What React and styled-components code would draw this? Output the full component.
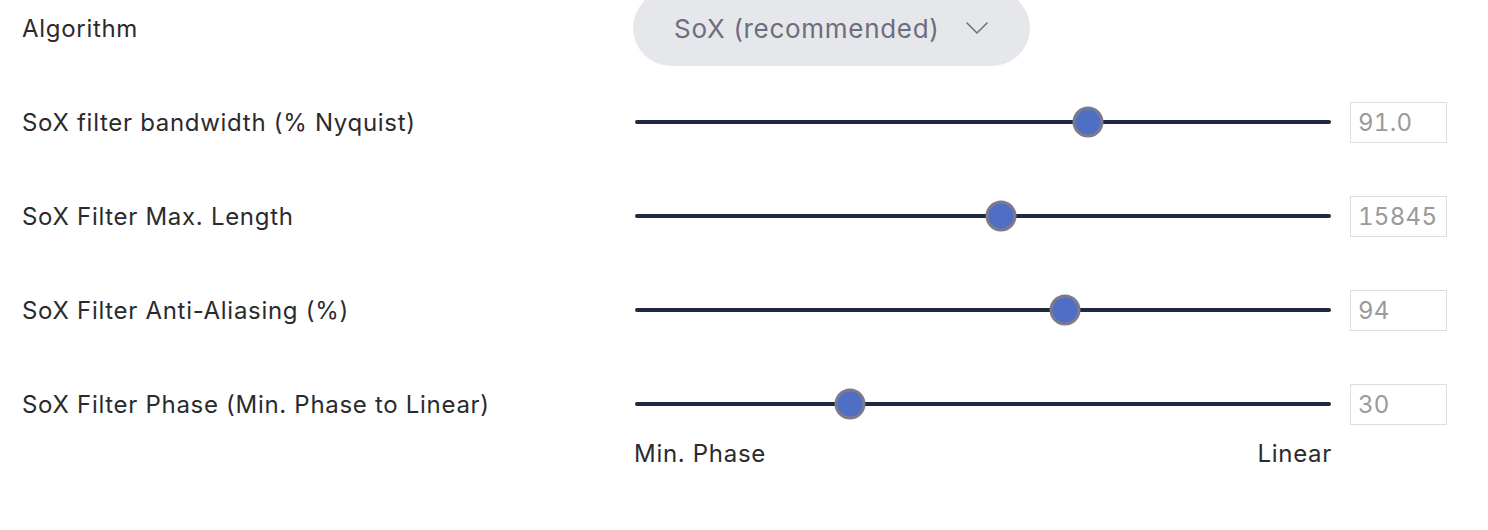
import React from 'react'
import styled, { createGlobalStyle } from 'styled-components'

const GlobalStyle = createGlobalStyle`
    html, body {
        margin: 0;
        padding: 0;
        background: #fff;
        font-family: Inter, "Noto Sans", sans-serif;
    }
`

const Page = styled.div`
    display: flex;
    flex-direction: column;
    margin-top: -19px;
    padding-left: 22px;
    min-height: 549px;
`

const Row = styled.div`
    display: grid;
    grid-template-columns: 594px 700px 97px;
    column-gap: 17px;
    align-items: center;
    height: ${ ( { short } ) => short ? 'auto' : '94px' };
    margin-top: ${ ( { short } ) => short ? '-12px' : '0' };
`

const Label = styled.div`
    font-size: 24px;
    color: #2b2b2e;
    letter-spacing: 0.7px;
`

const Select = styled.div`
    display: flex;
    align-items: center;
    justify-content: space-between;
    width: 397px;
    height: 76px;
    box-sizing: border-box;
    padding: 0 42px 0 41px;
    border-radius: 38px;
    background: #e6e7ea;
    color: #6d6d7e;
    font-size: 26px;
    letter-spacing: 0.7px;
`

const Chevron = () => (
    <svg width="22" height="12" viewBox="0 0 22 12" fill="none">
        <path d="M1 1l10 10L21 1" stroke="#6d6d7e" strokeWidth="1.5" strokeLinecap="round" strokeLinejoin="round" />
    </svg>
)

const SliderCol = styled.div`
    padding: 0 2px;
`

const Track = styled.div`
    position: relative;
    height: 4px;
    background: #1f2940;
    border-radius: 2px;
`

const Thumb = styled.div`
    position: absolute;
    top: 50%;
    width: 31px;
    height: 31px;
    box-sizing: border-box;
    border-radius: 50%;
    background: #4f6fc4;
    border: 3px solid #7c7b8e;
    transform: translate(-50%, -50%);
`

const Ends = styled.div`
    display: flex;
    justify-content: space-between;
    padding: 0 1px 0 1px;
    font-size: 24px;
    letter-spacing: 0.7px;
    color: #2b2b2e;
`

const NumberBox = styled.div`
    height: 41px;
    box-sizing: border-box;
    border: 1px solid #dedede;
    padding-left: 7px;
    display: flex;
    align-items: center;
    font-size: 24px;
    font-variant-numeric: tabular-nums;
    letter-spacing: 0.3px;
    color: #9a9a9a;
`

const sliders = [
    { label: 'SoX filter bandwidth (% Nyquist)', pct: 65.1, value: '91.0' },
    { label: 'SoX Filter Max. Length', pct: 52.6, value: '15845' },
    { label: 'SoX Filter Anti-Aliasing (%)', pct: 61.8, value: '94' },
    { label: 'SoX Filter Phase (Min. Phase to Linear)', pct: 30.9, value: '30' },
]

export default function App() {
    return (
        <>
            <GlobalStyle />
            <Page>
                <Row>
                    <Label>Algorithm</Label>
                    <Select>
                        <span>SoX (recommended)</span>
                        <Chevron />
                    </Select>
                </Row>

                { sliders.map( ( s ) => (
                    <Row key={ s.label }>
                        <Label>{ s.label }</Label>
                        <SliderCol>
                            <Track>
                                <Thumb style={ { left: `${ s.pct }%` } } />
                            </Track>
                        </SliderCol>
                        <NumberBox>{ s.value }</NumberBox>
                    </Row>
                ) ) }

                <Row short>
                    <span />
                    <Ends>
                        <span>Min. Phase</span>
                        <span>Linear</span>
                    </Ends>
                </Row>
            </Page>
        </>
    )
}
